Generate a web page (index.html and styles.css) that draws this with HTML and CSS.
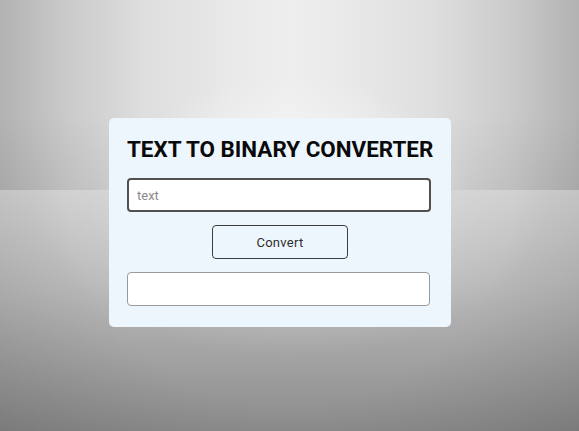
FILE: index.html
```html
<!DOCTYPE html>
<html>
<head>
<meta charset="utf-8">
<link rel="stylesheet" href="styles.css">
</head>
<body>
<div class="stage">
  <div class="card">
    <h1 class="title">TEXT TO BINARY CONVERTER</h1>
    <input class="field field-in" type="text" placeholder="text">
    <button class="btn">Convert</button>
    <div class="field field-out"></div>
  </div>
</div>
</body>
</html>
```
FILE: styles.css
```css
html, body {
  margin: 0;
  height: 100%;
}
body {
  font-family: Roboto, "Liberation Sans", sans-serif;
  background:
    radial-gradient(ellipse 30% 60% at 50% 100%, rgba(250,250,250,0.8) 0%, rgba(250,250,250,0) 100%) top / 100% 190px no-repeat,
    linear-gradient(to bottom, rgba(0,0,0,0) 60%, rgba(0,0,0,0.06) 100%) top / 100% 190px no-repeat,
    linear-gradient(to right, #b2b2b2 0%, #cbcbcb 12%, #dedede 25%, #e9e9e9 40%, #eeeeee 50%, #e9e9e9 60%, #dedede 75%, #cbcbcb 88%, #b2b2b2 100%) top / 100% 190px no-repeat,
    radial-gradient(ellipse 45% 70% at 50% 0%, rgba(255,255,255,0.45) 0%, rgba(255,255,255,0) 100%) bottom / 100% 241px no-repeat,
    radial-gradient(ellipse 70% 160% at 50% 0%, rgba(0,0,0,0) 55%, rgba(0,0,0,0.14) 100%) bottom / 100% 241px no-repeat,
    linear-gradient(to bottom, #cecece 0%, #b8b8b8 40%, #8c8c8c 100%) bottom / 100% 241px no-repeat;
  overflow: hidden;
}
.stage {
  padding: 118px 0 0 109px;
}
.card {
  width: 342px;
  box-sizing: border-box;
  background: #eef6fd;
  border-radius: 5px;
  padding: 17px 20px 21px 18px;
  display: flex;
  flex-direction: column;
}
.title {
  margin: 0;
  font-size: 22.4px;
  font-weight: 700;
  color: #0a0a0a;
  text-align: center;
  line-height: 29px;
  white-space: nowrap;
}
.field {
  box-sizing: border-box;
  height: 34px;
  border-radius: 4px;
  background: #fff;
}
.field-in {
  margin-top: 14px;
  width: 304px;
  border: 2px solid #505050;
  padding: 0 8px;
  font-family: Roboto, "Liberation Sans", sans-serif;
  font-size: 13px;
  color: #222;
  outline: none;
}
.field-in::placeholder {
  color: #8a8a8a;
}
.btn {
  align-self: center;
  margin: 13px 0 0 2px;
  width: 136px;
  height: 34px;
  box-sizing: border-box;
  border: 1.5px solid #3c3c3c;
  border-radius: 4px;
  background: #eef6fd;
  font-family: Roboto, "Liberation Sans", sans-serif;
  font-size: 13px;
  letter-spacing: 0.3px;
  color: #2e2e2e;
  padding: 0;
}
.field-out {
  margin-top: 13px;
  width: 303px;
  border: 1px solid #9a9a9a;
}
```
